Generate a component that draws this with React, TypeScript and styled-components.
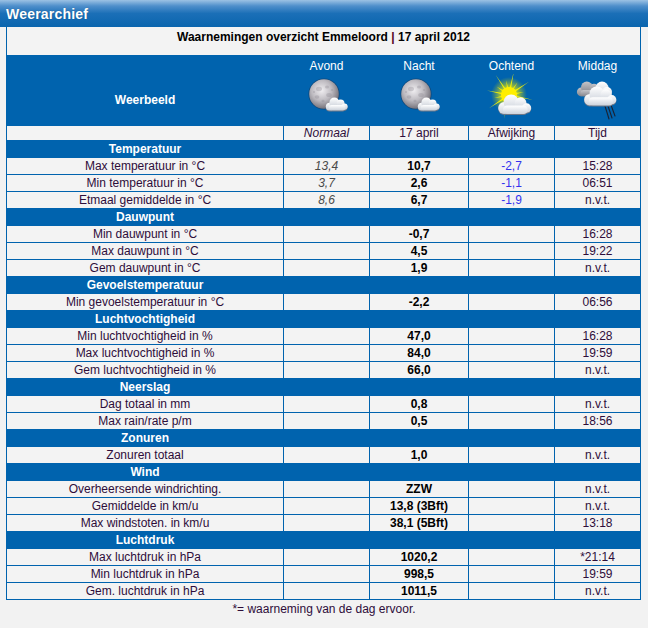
import React from 'react'
import styled, { createGlobalStyle } from 'styled-components'

const blue = '#0063ae'
const cellBg = '#f3f3f3'
const ink = '#2e0d3a'

const GlobalStyle = createGlobalStyle`
  html, body {
    margin: 0;
    padding: 0;
    background: #f2f2f2;
    font-family: "Liberation Sans", Arial, sans-serif;
    font-size: 12px;
  }
`

const Page = styled.div`
  width: 648px;
  min-height: 628px;
`

const TitleBar = styled.div`
  height: 27px;
  display: flex;
  align-items: center;
  padding-left: 6px;
  background: linear-gradient(to bottom, #9cc2e4 0%, #4f8fcb 22%, #1b6fb7 50%, #0a65ae 100%);
  color: #fff;
  font-weight: bold;
  font-size: 14px;
  letter-spacing: 0.2px;
  text-shadow: 0 0 1px rgba(0, 0, 0, 0.3);
`

const Table = styled.table`
  margin-left: 6px;
  width: 635px;
  table-layout: fixed;
  border-collapse: collapse;
  border: 1px solid ${blue};
  border-top: none;
  background: ${cellBg};
`

const Cell = styled.td<{ $tone?: 'label' | 'normal' | 'value' | 'diff' | 'time' }>`
  height: 16px;
  padding: 0;
  border: 1px solid ${blue};
  text-align: center;
  vertical-align: middle;
  line-height: 14px;
  font-style: ${({ $tone }) => ($tone === 'normal' ? 'italic' : 'normal')};
  font-weight: ${({ $tone }) => ($tone === 'value' ? 'bold' : 'normal')};
  color: ${({ $tone }) =>
    $tone === 'value' ? '#000' : $tone === 'diff' ? '#3333ee' : $tone === 'normal' ? '#4a4a4a' : ink};
`

const TitleCell = styled.td`
  height: 25px;
  padding: 3px 0 0;
  border: 1px solid ${blue};
  border-top: none;
  text-align: center;
  vertical-align: top;
  font-weight: bold;
  color: #000;
`

const Pipe = styled.span`
  color: #550022;
`

const HeadCell = styled.th<{ $main?: boolean }>`
  height: 69px;
  padding: 0;
  background: ${blue};
  border: 1px solid ${blue};
  color: #fff;
  font-size: 12px;
  font-weight: ${({ $main }) => ($main ? 'bold' : 'normal')};
  vertical-align: ${({ $main }) => ($main ? 'middle' : 'top')};
  text-align: center;
`

const MainLabel = styled.span`
  display: block;
  padding-top: 19px;
`

const HeadInner = styled.div`
  display: flex;
  flex-direction: column;
  align-items: center;
  padding-top: 3px;
  gap: 1px;
`

const SubCell = styled.td<{ $italic?: boolean }>`
  height: 14px;
  padding: 0;
  border: 1px solid ${blue};
  text-align: center;
  vertical-align: middle;
  line-height: 14px;
  font-style: ${({ $italic }) => ($italic ? 'italic' : 'normal')};
  color: ${ink};
`

const SectionCell = styled.td`
  height: 16px;
  padding: 0;
  background: ${blue};
  border: 1px solid ${blue};
  color: #fff;
  font-weight: bold;
  text-align: center;
  line-height: 14px;
`

const SectionFill = styled.td`
  background: ${blue};
  border: 1px solid ${blue};
`

const Footnote = styled.div`
  margin-top: 2px;
  text-align: center;
  color: ${ink};
`

const CloudShape: React.FC<{ x: number; y: number; s: number; fill: string }> = ({ x, y, s, fill }) => (
  <g transform={`translate(${x} ${y}) scale(${s})`} fill={fill}>
    <circle cx="6" cy="11" r="5" />
    <circle cx="12" cy="6" r="6.5" />
    <circle cx="20" cy="7" r="5" />
    <circle cx="25" cy="11" r="4" />
    <rect x="5" y="9" width="21" height="7" rx="3.5" />
  </g>
)

const MoonIcon: React.FC<{ id: string }> = ({ id }) => (
  <svg width="46" height="44" viewBox="0 0 46 44">
    <defs>
      <radialGradient id={`${id}m`} cx="42%" cy="38%" r="62%">
        <stop offset="0%" stopColor="#f0eef1" />
        <stop offset="55%" stopColor="#bdbac0" />
        <stop offset="100%" stopColor="#75727a" />
      </radialGradient>
      <linearGradient id={`${id}c`} x1="0" y1="0" x2="0" y2="1">
        <stop offset="0%" stopColor="#ffffff" />
        <stop offset="100%" stopColor="#c9cfd8" />
      </linearGradient>
    </defs>
    <circle cx="20" cy="20" r="15.6" fill="#1c2a44" opacity="0.45" />
    <circle cx="20" cy="20" r="14.8" fill={`url(#${id}m)`} />
    <g fill="#8f8b94" opacity="0.35">
      <ellipse cx="15" cy="15" rx="3" ry="2.2" />
      <ellipse cx="23" cy="13" rx="2" ry="1.6" />
      <ellipse cx="13" cy="23" rx="2.4" ry="1.8" />
      <ellipse cx="25" cy="21" rx="2.8" ry="2" />
      <ellipse cx="19" cy="27" rx="1.6" ry="1.2" />
      <circle cx="10" cy="18" r="1" />
      <circle cx="28" cy="16" r="1.1" />
    </g>
    <CloudShape x={21} y={25} s={0.78} fill="#6f7888" />
    <CloudShape x={21} y={24} s={0.78} fill={`url(#${id}c)`} />
  </svg>
)

const sunRays = Array.from({ length: 16 }, (_, i) => {
  const a = (i / 16) * Math.PI * 2 - Math.PI / 2 + 0.2
  const len = i % 2 === 0 ? 24 : 15
  const w = 0.15
  const cx = 22
  const cy = 21
  const p1 = [cx + Math.cos(a - w) * 5, cy + Math.sin(a - w) * 5]
  const p2 = [cx + Math.cos(a) * len, cy + Math.sin(a) * len]
  const p3 = [cx + Math.cos(a + w) * 5, cy + Math.sin(a + w) * 5]
  return [p1, p2, p3].map((p) => p.map((n) => n.toFixed(1)).join(',')).join(' ')
})

const SunCloudIcon: React.FC = () => (
  <svg width="50" height="48" viewBox="0 0 50 48">
    <defs>
      <radialGradient id="sunGlow" cx="50%" cy="50%" r="50%">
        <stop offset="0%" stopColor="#ffff90" stopOpacity="1" />
        <stop offset="45%" stopColor="#f4f000" stopOpacity="0.7" />
        <stop offset="100%" stopColor="#c8d000" stopOpacity="0" />
      </radialGradient>
      <linearGradient id="sunCloud" x1="0" y1="0" x2="0" y2="1">
        <stop offset="0%" stopColor="#ffffff" />
        <stop offset="100%" stopColor="#cdd3dc" />
      </linearGradient>
    </defs>
    <circle cx="22" cy="21" r="18" fill="url(#sunGlow)" />
    <g fill="#f8f200">
      {sunRays.map((pts, i) => (
        <polygon key={i} points={pts} />
      ))}
    </g>
    <circle cx="22" cy="21" r="8" fill="#ffee00" />
    <CloudShape x={10} y={22} s={1.18} fill="#6f7888" />
    <CloudShape x={10} y={21} s={1.18} fill="url(#sunCloud)" />
  </svg>
)

const RainCloudIcon: React.FC = () => (
  <svg width="50" height="48" viewBox="0 0 50 48">
    <defs>
      <linearGradient id="rainGrey" x1="0" y1="0" x2="0" y2="1">
        <stop offset="0%" stopColor="#c4c4c8" />
        <stop offset="100%" stopColor="#85858c" />
      </linearGradient>
      <linearGradient id="rainWhite" x1="0" y1="0" x2="0" y2="1">
        <stop offset="0%" stopColor="#ffffff" />
        <stop offset="100%" stopColor="#cdd3dc" />
      </linearGradient>
    </defs>
    <CloudShape x={3} y={8} s={0.9} fill="url(#rainGrey)" />
    <g stroke="#1a2233" strokeWidth="1.1" strokeLinecap="round">
      <line x1="32" y1="32" x2="36" y2="45" />
      <line x1="35" y1="32" x2="39" y2="44" />
      <line x1="38" y1="31" x2="42" y2="42" />
    </g>
    <CloudShape x={10} y={14} s={1.15} fill="#6f7888" />
    <g transform="translate(22 5)" fill="url(#rainWhite)">
      <circle cx="7" cy="9" r="6.5" />
      <circle cx="12" cy="13" r="5" />
    </g>
    <CloudShape x={10} y={13} s={1.15} fill="url(#rainWhite)" />
  </svg>
)

type Row = [string, string, string, string, string]

const sections: { title: string; rows: Row[] }[] = [
  {
    title: 'Temperatuur',
    rows: [
      ['Max temperatuur in °C', '13,4', '10,7', '-2,7', '15:28'],
      ['Min temperatuur in °C', '3,7', '2,6', '-1,1', '06:51'],
      ['Etmaal gemiddelde in °C', '8,6', '6,7', '-1,9', 'n.v.t.'],
    ],
  },
  {
    title: 'Dauwpunt',
    rows: [
      ['Min dauwpunt in °C', '', '-0,7', '', '16:28'],
      ['Max dauwpunt in °C', '', '4,5', '', '19:22'],
      ['Gem dauwpunt in °C', '', '1,9', '', 'n.v.t.'],
    ],
  },
  {
    title: 'Gevoelstemperatuur',
    rows: [['Min gevoelstemperatuur in °C', '', '-2,2', '', '06:56']],
  },
  {
    title: 'Luchtvochtigheid',
    rows: [
      ['Min luchtvochtigheid in %', '', '47,0', '', '16:28'],
      ['Max luchtvochtigheid in %', '', '84,0', '', '19:59'],
      ['Gem luchtvochtigheid in %', '', '66,0', '', 'n.v.t.'],
    ],
  },
  {
    title: 'Neerslag',
    rows: [
      ['Dag totaal in mm', '', '0,8', '', 'n.v.t.'],
      ['Max rain/rate p/m', '', '0,5', '', '18:56'],
    ],
  },
  {
    title: 'Zonuren',
    rows: [['Zonuren totaal', '', '1,0', '', 'n.v.t.']],
  },
  {
    title: 'Wind',
    rows: [
      ['Overheersende windrichting.', '', 'ZZW', '', 'n.v.t.'],
      ['Gemiddelde in km/u', '', '13,8 (3Bft)', '', 'n.v.t.'],
      ['Max windstoten. in km/u', '', '38,1 (5Bft)', '', '13:18'],
    ],
  },
  {
    title: 'Luchtdruk',
    rows: [
      ['Max luchtdruk in hPa', '', '1020,2', '', '*21:14'],
      ['Min luchtdruk in hPa', '', '998,5', '', '19:59'],
      ['Gem. luchtdruk in hPa', '', '1011,5', '', 'n.v.t.'],
    ],
  },
]

const periods: { name: string; icon: React.ReactNode }[] = [
  { name: 'Avond', icon: <MoonIcon id="avond" /> },
  { name: 'Nacht', icon: <MoonIcon id="nacht" /> },
  { name: 'Ochtend', icon: <SunCloudIcon /> },
  { name: 'Middag', icon: <RainCloudIcon /> },
]

const App: React.FC = () => (
  <Page>
    <GlobalStyle />
    <TitleBar>Weerarchief</TitleBar>
    <Table>
      <colgroup>
        <col style={{ width: 277 }} />
        <col style={{ width: 86 }} />
        <col style={{ width: 99 }} />
        <col style={{ width: 86 }} />
        <col style={{ width: 86 }} />
      </colgroup>
      <tbody>
        <tr>
          <TitleCell colSpan={5}>
            Waarnemingen overzicht Emmeloord <Pipe>|</Pipe> 17 april 2012
          </TitleCell>
        </tr>
        <tr>
          <HeadCell $main>
            <MainLabel>Weerbeeld</MainLabel>
          </HeadCell>
          {periods.map((p) => (
            <HeadCell key={p.name}>
              <HeadInner>
                {p.name}
                {p.icon}
              </HeadInner>
            </HeadCell>
          ))}
        </tr>
        <tr>
          <SubCell />
          <SubCell $italic>Normaal</SubCell>
          <SubCell>17 april</SubCell>
          <SubCell>Afwijking</SubCell>
          <SubCell>Tijd</SubCell>
        </tr>
        {sections.map((section) => (
          <React.Fragment key={section.title}>
            <tr>
              <SectionCell>{section.title}</SectionCell>
              <SectionFill colSpan={4} />
            </tr>
            {section.rows.map((row) => (
              <tr key={row[0]}>
                <Cell $tone="label">{row[0]}</Cell>
                <Cell $tone="normal">{row[1]}</Cell>
                <Cell $tone="value">{row[2]}</Cell>
                <Cell $tone="diff">{row[3]}</Cell>
                <Cell $tone="time">{row[4]}</Cell>
              </tr>
            ))}
          </React.Fragment>
        ))}
      </tbody>
    </Table>
    <Footnote>*= waarneming van de dag ervoor.</Footnote>
  </Page>
)

export default App
